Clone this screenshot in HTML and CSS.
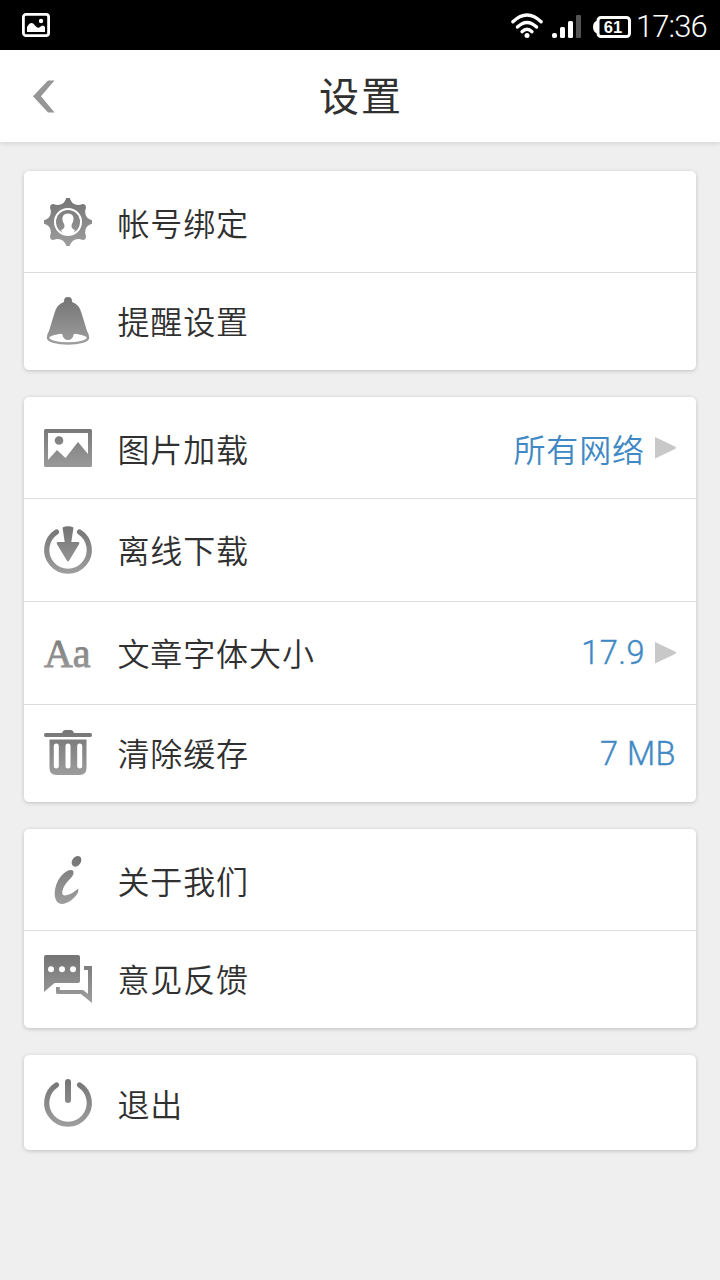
FILE: index.html
```html
<!DOCTYPE html>
<html lang="zh-CN">
<head>
<meta charset="utf-8">
<title>设置</title>
<link rel="stylesheet" href="styles.css">
</head>
<body>
<svg class="defs" width="0" height="0" aria-hidden="true">
  <defs>
    <linearGradient id="g" gradientUnits="userSpaceOnUse" x1="0" y1="0" x2="0" y2="48">
      <stop offset="0" stop-color="#747474"/><stop offset="1" stop-color="#9e9e9e"/>
    </linearGradient>
  </defs>
</svg>
<div class="status">
  <svg class="status-pic" width="28" height="24" viewBox="0 0 28 24"><rect x="1.4" y="1.4" width="25.2" height="21.2" rx="2.6" fill="none" stroke="#fff" stroke-width="2.8"/><path d="M5 19v-5q4-7 8-1.500q3 3.500 5 1.500q3-3 5 0v5z" fill="#fff"/><circle cx="19" cy="8" r="2.200" fill="#fff"/></svg>
  <div class="status-right">
    <svg class="wifi" width="32" height="26" viewBox="0 0 32 26"><g fill="none" stroke="#fff" stroke-width="3.300" stroke-linecap="round"><path d="M1.900 8.800Q16-4.800 30.100 8.800"/><path d="M6.400 14Q16 4.800 25.600 14"/><path d="M11 18.700Q16 14 21 18.700"/></g><circle cx="16" cy="22.500" r="2.500" fill="#fff"/></svg>
    <svg class="signal" width="30" height="24" viewBox="0 0 30 24"><g fill="#fff"><rect x="0" y="18" width="5" height="5" rx="2"/><rect x="8" y="12" width="5" height="11" rx="1.500"/><rect x="16" y="6" width="5" height="17" rx="1.500"/><rect x="24" y="0" width="5" height="23" rx="1" fill="#555"/></g></svg>
    <svg class="battery" width="38" height="22" viewBox="0 0 38 22"><path d="M4.500 5H3Q0 7 0 11t3 6h1.500z" fill="#fff"/><rect x="5" y="1.500" width="31.500" height="19" rx="3" fill="none" stroke="#fff" stroke-width="3"/><text class="battery-text" x="20" y="16.800" text-anchor="middle">61</text></svg>
    <span class="time">17:36</span>
  </div>
</div>
<header class="header">
  <svg class="back" width="22" height="33" viewBox="0 0 22 33"><path d="M0 16.300L15 0.500H21.500L8 16.300L21.500 32.500H15z" fill="#969696"/></svg>
  <h1 class="title">设置</h1>
</header>
<main class="list">
  <section class="card">
    <div class="row first">
      <svg class="icon" viewBox="0 0 48 48"><path fill="url(#g)" d="M22.300 0h3.400Q27.500 5.500 31.500 6.500Q35 7.500 38.500 6Q42 6 42 9.500Q40.500 13 41.500 16.500Q42.500 20.500 48 22.300v3.400Q42.500 27.500 41.500 31.500Q40.500 35 42 38.500Q42 42 38.500 42Q35 40.500 31.500 41.500Q27.500 42.500 25.700 48h-3.400Q20.500 42.500 16.500 41.500Q13 40.500 9.500 42Q6 42 6 38.500Q7.500 35 6.500 31.500Q5.500 27.500 0 25.700v-3.400Q5.500 20.500 6.500 16.500Q7.500 13 6 9.500Q6 6 9.500 6Q13 7.500 16.500 6.500Q20.500 5.500 22.300 0z"/><circle cx="24" cy="24" r="14" fill="#fff"/><circle cx="24" cy="24" r="12" fill="url(#g)"/><path d="M24 15.500c-4.500 0-6 3-5.400 7 .4 2.300 1.900 3.200 1.900 5.700 0 2-1.500 3-3.500 3.800L19 36.500h10l2-4.500c-2-.8-3.500-1.800-3.500-3.800 0-2.500 1.500-3.400 1.900-5.700.6-4-.9-7-5.400-7z" fill="#fff"/></svg>
      <span class="label">帐号绑定</span>
    </div>
    <div class="row last">
      <svg class="icon" viewBox="0 0 48 48"><ellipse cx="24" cy="40.800" rx="20" ry="5.800" fill="#fff" stroke="url(#g)" stroke-width="2.500"/><path fill="url(#g)" d="M20 5V4q0-4 4-4t4 4v1q7 2 9.500 11L43 34q2 3 2 6-5-3-15-3.300Q28.500 43 24 43t-6-6.300Q8 37 3 40q0-3 2-6l5.500-18Q13 7 20 5z"/></svg>
      <span class="label">提醒设置</span>
    </div>
  </section>
  <section class="card">
    <div class="row first">
      <svg class="icon" viewBox="0 0 48 48"><path fill="url(#g)" fill-rule="evenodd" d="M1.500 5h45Q48 5 48 6.500v35Q48 43 46.500 43h-45Q0 43 0 41.500v-35Q0 5 1.500 5zM4 9v27l9-10 8.500 8L34 18l10 12V9z"/><circle cx="15" cy="16.500" r="4.300" fill="url(#g)"/></svg>
      <span class="label">图片加载</span><span class="value">所有网络</span><svg class="arrow" viewBox="0 0 21 22"><path d="M0 0L20 9.600Q22 10.800 20 12L0 21.500z"/></svg>
    </div>
    <div class="row middle">
      <svg class="icon" viewBox="0 0 48 48"><path d="M12.500 6A21.300 21.300 0 1 0 35.500 6" fill="none" stroke="url(#g)" stroke-width="5.200" stroke-linecap="round"/><path fill="url(#g)" d="M18.500 1.500Q24-1 29.500 1.500L27.300 16H34q2 .3 1 2.200L25.200 34.500Q24 36.500 22.800 34.500L13 18.200Q12 16.300 14 16h6.700z"/></svg>
      <span class="label">离线下载</span>
    </div>
    <div class="row middle">
      <svg class="icon" viewBox="0 0 48 48"><text class="letters" x="0" y="37.500" textLength="46.500" lengthAdjust="spacingAndGlyphs">Aa</text></svg>
      <span class="label">文章字体大小</span><span class="value latin">17.9</span><svg class="arrow" viewBox="0 0 21 22"><path d="M0 0L20 9.600Q22 10.800 20 12L0 21.500z"/></svg>
    </div>
    <div class="row last">
      <svg class="icon" viewBox="0 0 48 48"><path fill="url(#g)" d="M1.500 4H18q1-3 3-3h6q2 0 3 3h16.500Q48 4 48 6t-1.500 2h-45Q0 8 0 6t1.500-2z"/><path fill="url(#g)" d="M5.500 10.500h37V39q0 7-7 7h-23q-7 0-7-7z"/><g fill="none" stroke="#fff" stroke-width="5" stroke-linecap="round"><path d="M12.300 17v20M24 17v20M35.700 17v20"/></g></svg>
      <span class="label">清除缓存</span><span class="value latin">7 MB</span>
    </div>
  </section>
  <section class="card">
    <div class="row first">
      <svg class="icon" viewBox="0 0 48 48"><ellipse cx="32.500" cy="5.300" rx="4.300" ry="5.800" transform="rotate(35 32.500 5.300)" fill="url(#g)"/><path fill="url(#g)" d="M29.500 15.500Q28 13 23.500 14.800Q16 19 12.500 28Q9 38 12 44Q14 48.500 20 47.800Q27 46 32.500 39Q35 35.500 34.300 32.500Q26 39.500 20.500 39.500Q17.500 39.300 18.500 34.500Q20 29 25 24Q30 19.500 29.500 15.500z"/></svg>
      <span class="label">关于我们</span>
    </div>
    <div class="row last">
      <svg class="icon" viewBox="0 0 48 48"><path fill="url(#g)" d="M2 0h32q2 0 2 2v24q0 2-2 2H10.500L0 37V2Q0 0 2 0z"/><g fill="#fff"><circle cx="7" cy="14.200" r="3"/><circle cx="18" cy="14.200" r="3"/><circle cx="29" cy="14.200" r="3"/></g><path fill="url(#g)" d="M40 11h8v37l-11-9H13.500Q12 39 12 37.500V32h3.800v3H39l5 4V15h-4z"/></svg>
      <span class="label">意见反馈</span>
    </div>
  </section>
  <section class="card">
    <div class="row only">
      <svg class="icon" viewBox="0 0 48 48"><path d="M12.500 6A21.300 21.300 0 1 0 35.500 6" fill="none" stroke="url(#g)" stroke-width="5.200" stroke-linecap="round"/><rect x="21" y="0" width="6" height="24" rx="3" fill="url(#g)"/></svg>
      <span class="label">退出</span>
    </div>
  </section>
</main>
</body>
</html>
```

FILE: styles.css
```css
* { box-sizing: border-box; }
body { margin: 0; width: 720px; height: 1280px; overflow: hidden; background: #efefef; color: #303030; font-family: Roboto, "Noto Sans CJK SC", sans-serif; }
.defs { display: block; }
.status { display: flex; justify-content: space-between; height: 50px; padding: 0 12px 0 22px; background: #000; color: #fff; }
.status-pic { margin-top: 13px; }
.status-right { display: flex; align-items: flex-start; }
.wifi { margin: 13px 9px 0 0; }
.signal { margin: 15px 11px 0 0; }
.battery { margin: 16px 5px 0 0; }
.battery-text { font: bold 16.5px "Liberation Sans", sans-serif; fill: #fff; }
.time { width: 72px; font-size: 31px; font-weight: 300; line-height: 54px; letter-spacing: -0.9px; white-space: nowrap; }
.header { display: grid; grid-template-columns: 54px 1fr 54px; align-items: center; height: 92px; background: #fff; box-shadow: 0 1px 5px rgba(0, 0, 0, .14); }
.back { margin-left: 33px; }
.title { margin: 4px 0 0; padding-left: 2px; text-align: center; font-size: 40px; font-weight: 400; letter-spacing: 2px; line-height: 60px; }
.list { display: flex; flex-direction: column; gap: 27px; padding: 29px 24px; }
.card { background: #fff; border-radius: 5px; box-shadow: 0 1px 4px rgba(0, 0, 0, .2); }
.row { display: flex; align-items: center; height: 103px; padding: 0 20px; border-bottom: 1px solid #dcdcdc; }
.row.first { height: 102px; }
.row.last { height: 97px; padding-bottom: 1px; border-bottom: 0; }
.row.only { height: 95px; border-bottom: 0; }
.icon { flex: none; width: 48px; height: 48px; margin-right: 25.4px; overflow: visible; }
.letters { font: 41px "Liberation Serif", serif; fill: url(#g); stroke: url(#g); stroke-width: .9px; }
.label, .value { font-size: 32px; font-weight: 350; line-height: 46px; letter-spacing: .9px; padding-top: 3px; white-space: nowrap; }
.row.first .label, .row.first .value, .row.only .label { padding-top: 7px; }
.row.last .label { padding-top: 4px; }
.value { margin-left: auto; color: #4189c4; }
.value.latin { padding-top: 0; font-size: 32.5px; font-weight: 300; letter-spacing: .5px; -webkit-text-stroke: .4px #4189c4; }
.row.last .value.latin { padding-top: 2px; }
.arrow { width: 21px; height: 22px; margin-left: 10px; fill: #c8c8c8; }
```
